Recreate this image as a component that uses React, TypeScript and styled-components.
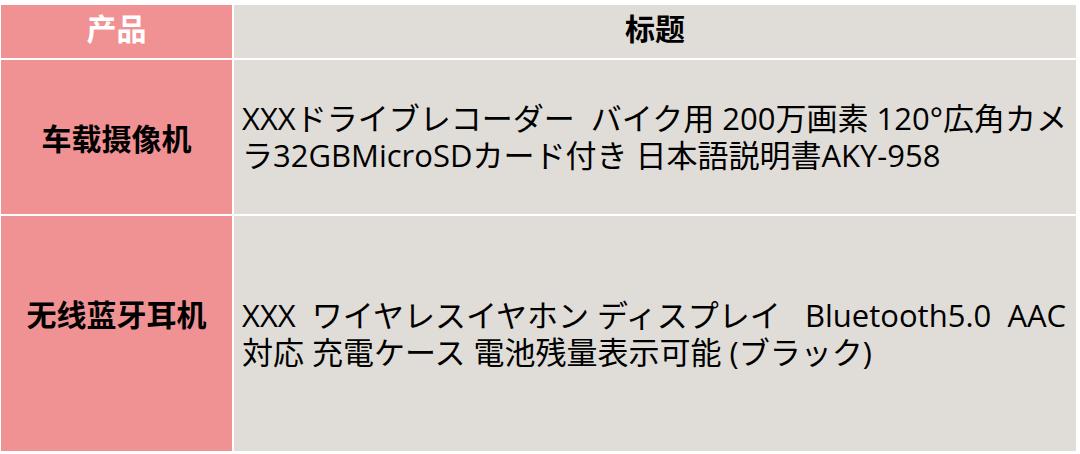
import * as React from 'react';
import styled, { createGlobalStyle } from 'styled-components';

const GlobalStyle = createGlobalStyle`
    html, body {
        margin: 0;
        padding: 0;
        background: #ffffff;
    }
`;

const PINK = '#f09293';
const GRAY = '#e0ddd8';

const Page = styled.div`
    width: 1080px;
    height: 454px;
    padding: 5px 0 0 1px;
    box-sizing: border-box;
`;

const Table = styled.div`
    display: grid;
    grid-template-columns: 231px 842px;
    grid-template-rows: 53px 154px 235px;
    gap: 2px;
`;

const HeadCell = styled.div<{ $tone: 'pink' | 'gray' }>`
    display: flex;
    align-items: center;
    justify-content: center;
    padding-bottom: 10px;
    box-sizing: border-box;
    background: ${p => (p.$tone === 'pink' ? PINK : GRAY)};
    color: ${p => (p.$tone === 'pink' ? '#ffffff' : '#000000')};
    font-family: "Noto Sans CJK SC", sans-serif;
    font-weight: 700;
    font-size: 30px;
`;

const ProductCell = styled.div<{ $lift?: number }>`
    display: flex;
    align-items: center;
    justify-content: center;
    padding-bottom: ${p => p.$lift ?? 0}px;
    box-sizing: border-box;
    background: ${PINK};
    color: #000000;
    font-family: "Noto Sans CJK SC", sans-serif;
    font-weight: 700;
    font-size: 30px;
`;

const TitleCell = styled.div`
    display: flex;
    align-items: center;
    padding: 0 8px;
    box-sizing: border-box;
    background: ${GRAY};
    color: #000000;
    font-family: "Open Sans", "Noto Sans CJK JP", sans-serif;
    font-size: 31px;
    line-height: 37px;
    white-space: pre;
    overflow: hidden;
`;

interface Row {
    product: string;
    lines: string[];
    lift?: number;
}

const rows: Row[] = [
    {
        product: '车载摄像机',
        lines: [
            'XXXドライブレコーダー  バイク用 200万画素 120°広角カメ',
            'ラ32GBMicroSDカード付き 日本語説明書AKY-958',
        ],
    },
    {
        product: '无线蓝牙耳机',
        lines: [
            'XXX  ワイヤレスイヤホン ディスプレイ   Bluetooth5.0  AAC',
            '対応 充電ケース 電池残量表示可能 (ブラック)',
        ],
        lift: 42,
    },
];

export default function App(): JSX.Element {
    return (
        <Page>
            <GlobalStyle />
            <Table>
                <HeadCell $tone="pink">产品</HeadCell>
                <HeadCell $tone="gray">标题</HeadCell>
                {rows.map(row => (
                    <React.Fragment key={row.product}>
                        <ProductCell $lift={row.lift}>{row.product}</ProductCell>
                        <TitleCell>
                            <div>
                                {row.lines.map(line => (
                                    <div key={line}>{line}</div>
                                ))}
                            </div>
                        </TitleCell>
                    </React.Fragment>
                ))}
            </Table>
        </Page>
    );
}
